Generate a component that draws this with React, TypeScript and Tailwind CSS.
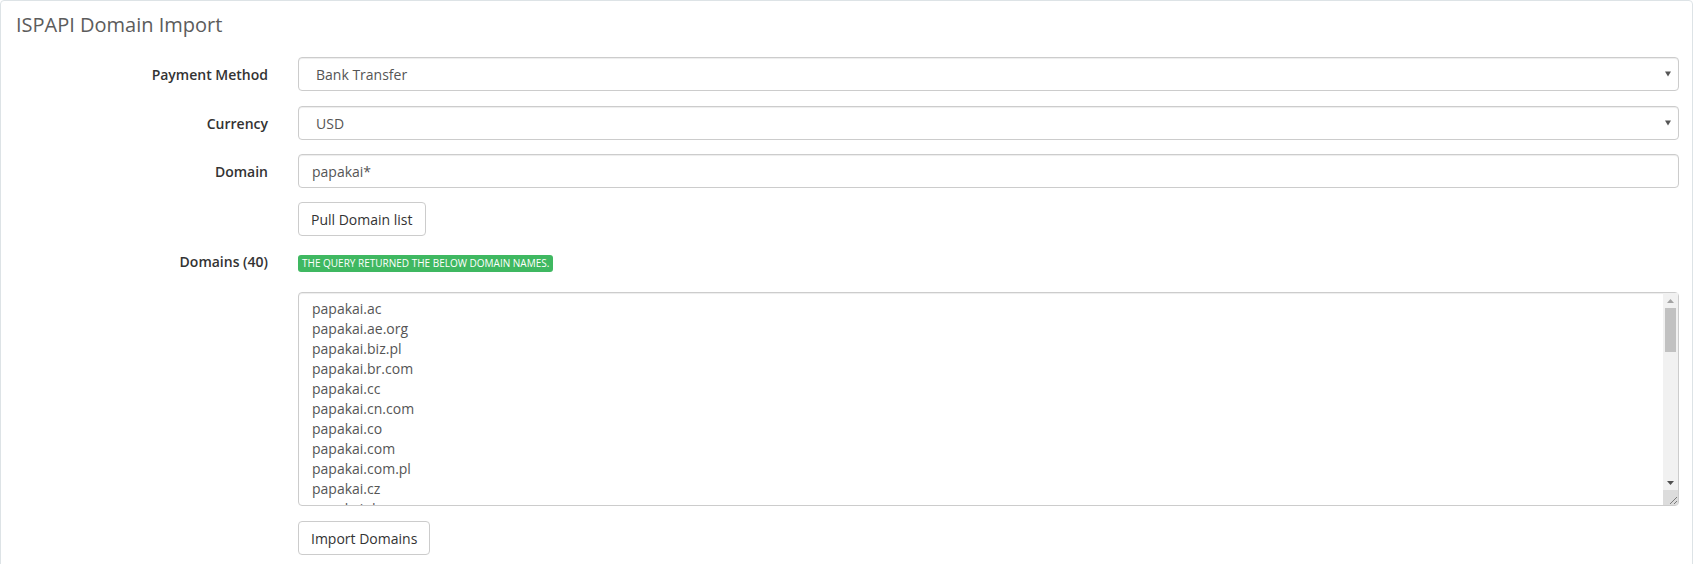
import type { ReactNode } from 'react'

const domains = [
  'ac', 'ae.org', 'biz.pl', 'br.com', 'cc', 'cn.com', 'co', 'com', 'com.pl', 'cz',
  'de', 'de.com', 'eu', 'eu.com', 'fr', 'gb.net', 'gr.com', 'hu.net', 'in', 'info',
  'it', 'jp.net', 'jpn.com', 'kr.com', 'la', 'me', 'mobi', 'net', 'net.pl', 'org',
  'org.pl', 'pl', 'pw', 'qc.com', 'ru.com', 'sa.com', 'se.net', 'uk.com', 'us.com', 'za.com',
].map(tld => `papakai.${tld}`)

function Linha({ rotulo, children, className = '' }: { rotulo?: string; children: ReactNode; className?: string }) {
  return (
    <div className={`flex items-center ${className}`}>
      <label className="w-[267px] shrink-0 text-right text-[14px] font-semibold text-[#333]">{rotulo}</label>
      <div className="ml-[30px] flex-1">{children}</div>
    </div>
  )
}

function Selecao({ valor }: { valor: string }) {
  return (
    <div className="relative">
      <select
        defaultValue={valor}
        className="h-[34px] w-full appearance-none rounded-[4px] border border-[#ccc] bg-white pl-[17px] text-[14px] text-[#555] shadow-[inset_0_1px_1px_rgba(0,0,0,0.075)] outline-none"
      >
        <option>{valor}</option>
      </select>
      <svg className="pointer-events-none absolute right-[8px] top-[14px]" width="6" height="6" viewBox="0 0 6 6">
        <path d="M0 0.5h6L3 5.5z" fill="#555" />
      </svg>
    </div>
  )
}

function Botao({ children }: { children: ReactNode }) {
  return (
    <button className="h-[34px] rounded-[4px] border border-[#ccc] bg-white px-[12px] text-[14px] text-[#333]">
      {children}
    </button>
  )
}

// barra de rolagem desenhada por cima do textarea (o navegador headless não mostra a nativa)
function BarraRolagem() {
  return (
    <div className="pointer-events-none absolute right-[1px] top-[1px] bottom-[1px] flex w-[15px] flex-col">
      <div className="flex flex-1 flex-col bg-[#f1f1f1]">
        <div className="flex h-[15px] items-center justify-center">
          <svg width="7" height="4" viewBox="0 0 7 4"><path d="M3.5 0L7 4H0z" fill="#a3a3a3" /></svg>
        </div>
        <div className="mx-[2px] h-[44px] bg-[#c1c1c1]" />
        <div className="flex-1" />
        <div className="flex h-[15px] items-center justify-center">
          <svg width="7" height="4" viewBox="0 0 7 4"><path d="M0 0h7L3.5 4z" fill="#505050" /></svg>
        </div>
      </div>
      <div className="relative h-[15px] bg-[#dcdcdc]">
        <svg className="absolute right-[1px] bottom-[1px]" width="8" height="8" viewBox="0 0 8 8">
          <path d="M1 8L8 1M5 8L8 5" stroke="#7a7a7a" strokeWidth="1" />
        </svg>
      </div>
    </div>
  )
}

export default function App() {
  return (
    <div className="h-[564px] overflow-hidden bg-white font-['Open_Sans',sans-serif]">
      <div className="h-[600px] rounded-t-[4px] border border-[#dde3e6] pr-[13px] pt-[13px]">
        <h3 className="pl-[15px] text-[20px] leading-[22px] font-normal text-[#5c5c5c]">ISPAPI Domain Import</h3>

        <div className="mt-[21px] flex flex-col">
          <Linha rotulo="Payment Method">
            <Selecao valor="Bank Transfer" />
          </Linha>
          <Linha rotulo="Currency" className="mt-[15px]">
            <Selecao valor="USD" />
          </Linha>
          <Linha rotulo="Domain" className="mt-[14px]">
            <input
              defaultValue="papakai*"
              className="h-[34px] w-full rounded-[4px] border border-[#ccc] bg-white px-[13px] text-[14px] text-[#555] shadow-[inset_0_1px_1px_rgba(0,0,0,0.075)] outline-none"
            />
          </Linha>
          <Linha className="mt-[14px]">
            <Botao>Pull Domain list</Botao>
          </Linha>

          <Linha rotulo="Domains (40)" className="mt-[15px] h-[20px]">
            <span className="inline-flex h-[17px] items-center rounded-[3px] bg-[#3fb861] px-[4px] text-[10px] text-white">
              THE QUERY RETURNED THE BELOW DOMAIN NAMES.
            </span>
          </Linha>

          <Linha className="mt-[21px]">
            <div className="relative">
              <textarea
                readOnly
                defaultValue={domains.join('\n')}
                className="block h-[214px] w-full resize-none overflow-hidden rounded-[4px] border border-[#ccc] bg-white py-[6px] pl-[13px] pr-[20px] text-[14px] leading-[20px] text-[#555] shadow-[inset_0_1px_1px_rgba(0,0,0,0.075)] outline-none"
              />
              <BarraRolagem />
            </div>
          </Linha>

          <Linha className="mt-[15px]">
            <Botao>Import Domains</Botao>
          </Linha>
        </div>
      </div>
    </div>
  )
}
